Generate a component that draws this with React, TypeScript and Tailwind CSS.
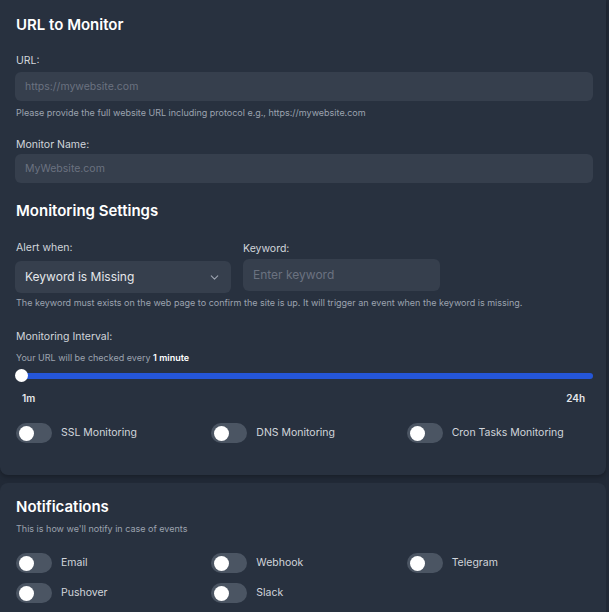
import React from 'react';
import { ChevronDown } from 'lucide-react';

function Toggle({ label }: { label: string }) {
  return (
    <label className="flex items-center gap-[9px]">
      <span className="relative w-[36px] h-[20px] rounded-full bg-[#4b5563] shrink-0">
        <span className="absolute left-[3px] top-[2.5px] w-[15px] h-[15px] rounded-full bg-white" />
      </span>
      <span className="text-[10.5px] leading-4 text-[#d1d5db]">{label}</span>
    </label>
  );
}

export default function App() {
  return (
    <div
      className="min-h-screen w-[609px] h-[612px] overflow-hidden bg-[#212936] text-white"
      style={{ fontFamily: 'Inter, "Noto Sans", sans-serif' }}
    >
      {/* URL + monitoring card */}
      <section className="w-[606px] bg-[#28313f] rounded-b-lg shadow-[0_2px_4px_rgba(0,0,0,0.25)] px-4 pt-[13px] pb-[32px]">
        <h2 className="text-[15px] leading-6 font-semibold text-white">URL to Monitor</h2>

        <div className="mt-4">
          <div className="text-[10.5px] leading-4 text-[#d1d5db]">URL:</div>
          <div className="mt-[3px] -ml-[1px] h-[29px] w-[578px] rounded-md bg-[#363f4d] flex items-center px-[10px] text-[10.5px] text-[#6b7280]">
            https://mywebsite.com
          </div>
          <p className="mt-[5px] text-[9px] leading-[14px] text-[#9ca3af]">
            Please provide the full website URL including protocol e.g., https://mywebsite.com
          </p>
        </div>

        <div className="mt-[17px]">
          <div className="text-[10.5px] leading-4 text-[#d1d5db]">Monitor Name:</div>
          <div className="mt-[1px] -ml-[1px] h-[29px] w-[578px] rounded-md bg-[#363f4d] flex items-center px-[10px] text-[10.5px] text-[#6b7280]">
            MyWebsite.com
          </div>
        </div>

        <h2 className="mt-4 text-[15px] leading-6 font-semibold text-white">Monitoring Settings</h2>

        <div className="mt-[17px] flex gap-3">
          <div className="w-[216px] -ml-[1px]">
            <div className="pl-[1px] text-[10.5px] leading-4 text-[#d1d5db]">Alert when:</div>
            <div className="mt-[5px] h-[32px] rounded-md bg-[#363f4d] flex items-center justify-between pl-[10px] pr-[10px] text-[12px] text-[#e5e7eb]">
              <span>Keyword is Missing</span>
              <ChevronDown size={13} className="text-[#9ca3af]" strokeWidth={2} />
            </div>
          </div>
          <div className="w-[197px]">
            <div className="mt-[1px] text-[10.5px] leading-4 text-[#d1d5db]">Keyword:</div>
            <div className="mt-[2px] h-[32px] rounded-md bg-[#363f4d] flex items-center px-[10px] text-[12px] text-[#6b7280]">
              Enter keyword
            </div>
          </div>
        </div>
        <p className="mt-[3px] text-[9px] leading-[14px] text-[#9ca3af]">
          The keyword must exists on the web page to confirm the site is up. It will trigger an event when the keyword is missing.
        </p>

        <div className="mt-[19px] text-[10.5px] leading-4 text-[#d1d5db]">Monitoring Interval:</div>
        <p className="mt-[6px] text-[9px] leading-[14px] text-[#9ca3af]">
          Your URL will be checked every <span className="font-semibold text-white">1 minute</span>
        </p>

        <div className="relative mt-[4px] h-[13px] w-[577px] flex items-center">
          <div className="h-[6px] w-full rounded-full bg-[#2556d8]" />
          <div className="absolute -left-[1px] top-0 w-[13px] h-[13px] rounded-full bg-white" />
        </div>
        <div className="mt-[9px] flex justify-between pl-[6px] pr-[5px] text-[10px] leading-[14px] font-semibold text-[#e5e7eb]">
          <span>1m</span>
          <span>24h</span>
        </div>

        <div className="mt-[18px] grid grid-cols-3 gap-x-3">
          <Toggle label="SSL Monitoring" />
          <Toggle label="DNS Monitoring" />
          <Toggle label="Cron Tasks Monitoring" />
        </div>
      </section>

      {/* Notifications card */}
      <section className="mt-2 w-[606px] bg-[#28313f] rounded-t-lg px-4 pt-3 pb-6">
        <h2 className="text-[15px] leading-6 font-semibold text-white">Notifications</h2>
        <p className="mt-[3px] text-[9px] leading-[14px] text-[#9ca3af]">
          This is how we'll notify in case of events
        </p>
        <div className="mt-[17px] grid grid-cols-3 gap-x-3 gap-y-[10px]">
          <Toggle label="Email" />
          <Toggle label="Webhook" />
          <Toggle label="Telegram" />
          <Toggle label="Pushover" />
          <Toggle label="Slack" />
        </div>
      </section>
    </div>
  );
}
